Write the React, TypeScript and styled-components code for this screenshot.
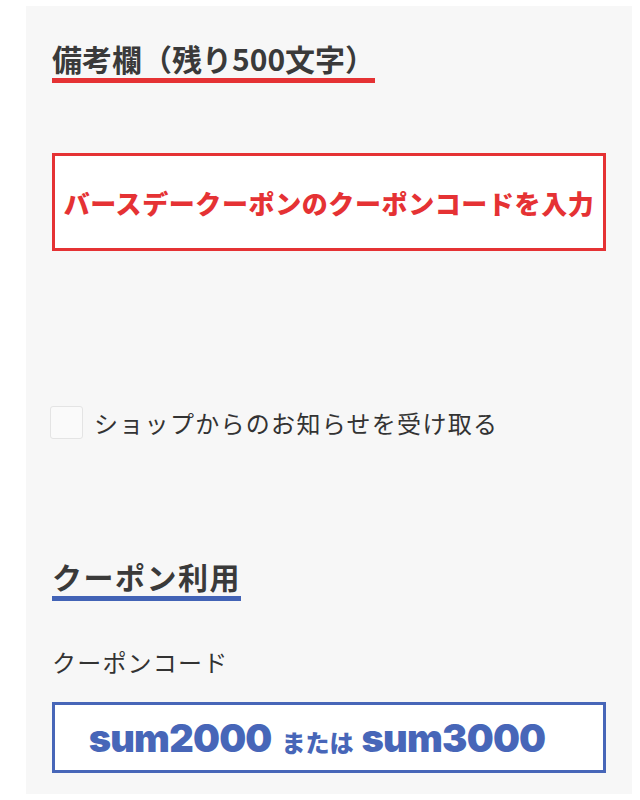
import React from 'react'
import styled, { createGlobalStyle } from 'styled-components'

const GlobalStyle = createGlobalStyle`
  body {
    margin: 0;
    background: #ffffff;
    font-family: "Noto Sans CJK JP", "Noto Sans", sans-serif;
    color: #333333;
  }
`

const Panel = styled.div`
  margin: 6px 8px 0 26px;
  min-height: 788px;
  background: #f7f7f7;
  padding: 35px 26px 0 26px;
  box-sizing: border-box;
`

const Heading = styled.h2<{ $line: string; $spacing: number }>`
  display: inline-block;
  margin: 0;
  font-size: 30px;
  line-height: 34px;
  font-weight: 700;
  color: #3a3a3a;
  padding-bottom: 3px;
  border-bottom: 5px solid ${p => p.$line};
  letter-spacing: ${p => p.$spacing}px;
`

const Section = styled.section<{ $gap: number }>`
  margin-top: ${p => p.$gap}px;
`

const NoteBox = styled.div<{ $color: string; $height: number }>`
  box-sizing: border-box;
  height: ${p => p.$height}px;
  border: 3px solid ${p => p.$color};
  background: #ffffff;
  display: flex;
  align-items: center;
  justify-content: center;
  color: ${p => p.$color};
  font-weight: 900;
  white-space: nowrap;
`

const RedText = styled.span`
  font-size: 26px;
  letter-spacing: 0.6px;
`

const CheckRow = styled.label`
  display: flex;
  align-items: center;
  gap: 11px;
  margin-left: -2px;
`

const CheckBox = styled.span`
  width: 31px;
  height: 31px;
  border: 1px solid #e4e4e4;
  border-radius: 3px;
  background: #fafafa;
`

const CheckText = styled.span`
  font-size: 24px;
  letter-spacing: 1.3px;
  color: #333333;
`

const FieldLabel = styled.div`
  font-size: 24px;
  color: #333333;
  letter-spacing: 1.2px;
`

const Code = styled.span`
  font-family: Inter, "Noto Sans CJK JP", sans-serif;
  font-size: 38px;
  font-weight: 900;
  letter-spacing: -0.8px;
`

const Or = styled.span`
  font-size: 24px;
  font-weight: 900;
  margin: 0 8px 0 10px;
`

const CodeLine = styled.div`
  display: flex;
  align-items: baseline;
  margin-right: 24px;
`

const App = () => {
  return (
    <>
      <GlobalStyle />
      <Panel>
        <Heading $line="#e53234" $spacing={0}>備考欄（残り500文字）</Heading>
        <Section $gap={70}>
          <NoteBox $color="#e53234" $height={98}>
            <RedText>バースデークーポンのクーポンコードを入力</RedText>
          </NoteBox>
        </Section>
        <Section $gap={154}>
          <CheckRow>
            <CheckBox />
            <CheckText>ショップからのお知らせを受け取る</CheckText>
          </CheckRow>
        </Section>
        <Section $gap={119}>
          <Heading $line="#4263b6" $spacing={1.5}>クーポン利用</Heading>
        </Section>
        <Section $gap={43}>
          <FieldLabel>クーポンコード</FieldLabel>
        </Section>
        <Section $gap={23}>
          <NoteBox $color="#4766b8" $height={71}>
            <CodeLine>
              <Code>sum2000</Code>
              <Or>または</Or>
              <Code>sum3000</Code>
            </CodeLine>
          </NoteBox>
        </Section>
      </Panel>
    </>
  )
}

export default App
